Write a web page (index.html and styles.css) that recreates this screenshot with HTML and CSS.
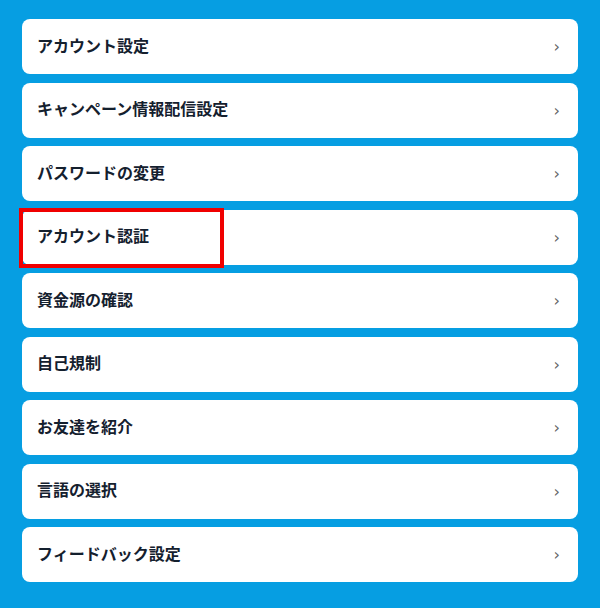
FILE: index.html
```html
<!DOCTYPE html>
<html lang="ja">
<head>
<meta charset="utf-8">
<link rel="stylesheet" href="styles.css">
</head>
<body>
<ul class="menu">
  <li class="item"><span class="label">アカウント設定</span><span class="chev">›</span></li>
  <li class="item"><span class="label">キャンペーン情報配信設定</span><span class="chev">›</span></li>
  <li class="item"><span class="label">パスワードの変更</span><span class="chev">›</span></li>
  <li class="item highlighted"><span class="label">アカウント認証</span><span class="chev">›</span><span class="mark"></span></li>
  <li class="item"><span class="label">資金源の確認</span><span class="chev">›</span></li>
  <li class="item"><span class="label">自己規制</span><span class="chev">›</span></li>
  <li class="item"><span class="label">お友達を紹介</span><span class="chev">›</span></li>
  <li class="item"><span class="label">言語の選択</span><span class="chev">›</span></li>
  <li class="item"><span class="label">フィードバック設定</span><span class="chev">›</span></li>
</ul>
</body>
</html>
```
FILE: styles.css
```css
html, body {
  margin: 0;
  padding: 0;
  background: #069ee2;
  height: 608px;
  overflow: hidden;
}
.menu {
  list-style: none;
  margin: 0;
  padding: 19px 22px 0 22px;
  display: flex;
  flex-direction: column;
  gap: 8.5px;
}
.item {
  position: relative;
  height: 55px;
  background: #ffffff;
  border-radius: 8px;
  display: flex;
  align-items: center;
  justify-content: space-between;
  padding: 0 18px 0 15px;
  font-family: "Noto Sans CJK JP", "Noto Sans", sans-serif;
}
.label {
  font-size: 16px;
  font-weight: 700;
  color: #14202e;
  margin-bottom: 4px;
}
.chev {
  font-family: "DejaVu Sans", sans-serif;
  font-size: 16px;
  color: #666;
  line-height: 1;
  margin-top: 1px;
}
.mark {
  position: absolute;
  left: -3px;
  top: -2px;
  width: 197px;
  height: 52px;
  border: 4px solid #f00000;
  pointer-events: none;
}
```
